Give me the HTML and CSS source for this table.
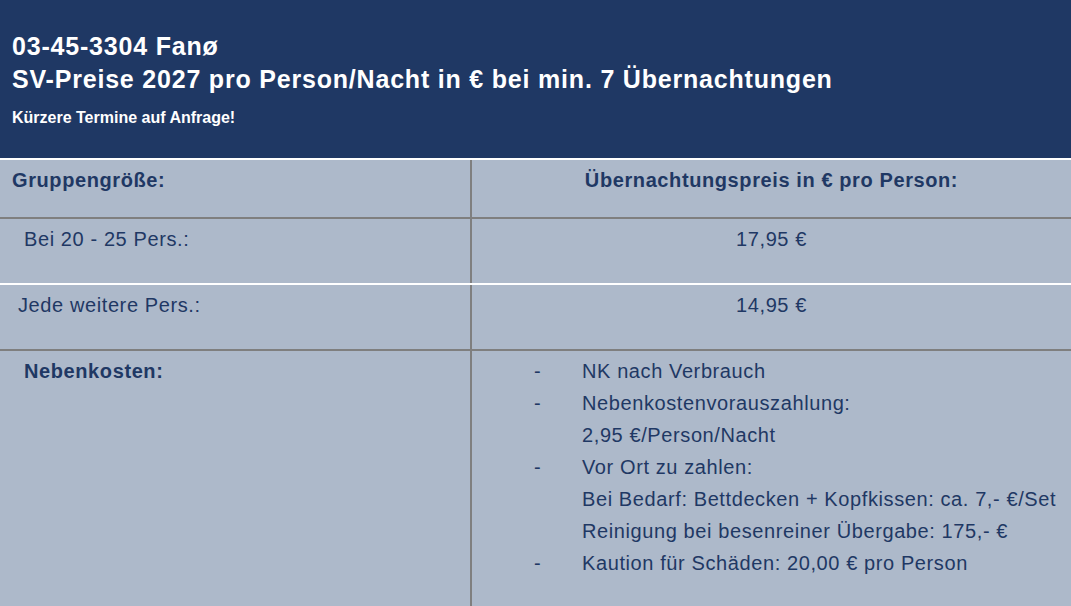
FILE: index.html
```html
<!DOCTYPE html>
<html lang="de">
<head>
<meta charset="utf-8">
<title>03-45-3304 Fanø – SV-Preise 2027</title>
<link rel="stylesheet" href="styles.css">
</head>
<body>
<div class="page">
  <header class="hero">
    <h1 class="title">
      <span class="title-line">03-45-3304 Fanø</span>
      <span class="title-line">SV-Preise 2027 pro Person/Nacht in € bei min. 7 Übernachtungen</span>
    </h1>
    <p class="note">Kürzere Termine auf Anfrage!</p>
  </header>

  <div class="table">
    <div class="row row-head sep-gray">
      <div class="cell cell-left pad-12 bold">Gruppengröße:</div>
      <div class="cell cell-right centered bold">Übernachtungspreis in € pro Person:</div>
    </div>
    <div class="row row-price sep-white">
      <div class="cell cell-left pad-24">Bei 20 - 25 Pers.:</div>
      <div class="cell cell-right centered">17,95 €</div>
    </div>
    <div class="row row-price sep-gray">
      <div class="cell cell-left pad-18">Jede weitere Pers.:</div>
      <div class="cell cell-right centered">14,95 €</div>
    </div>
    <div class="row row-costs">
      <div class="cell cell-left pad-24 list-top bold">Nebenkosten:</div>
      <div class="cell cell-right list-top">
        <ul class="costs">
          <li class="cost"><span class="dash">-</span><span class="cost-text">NK nach Verbrauch</span></li>
          <li class="cost"><span class="dash">-</span><span class="cost-text">Nebenkostenvorauszahlung:<br>2,95 €/Person/Nacht</span></li>
          <li class="cost"><span class="dash">-</span><span class="cost-text">Vor Ort zu zahlen:<br>Bei Bedarf: Bettdecken + Kopfkissen: ca. 7,- €/Set<br>Reinigung bei besenreiner Übergabe: 175,- €</span></li>
          <li class="cost"><span class="dash">-</span><span class="cost-text">Kaution für Schäden: 20,00 € pro Person</span></li>
        </ul>
      </div>
    </div>
  </div>
</div>
</body>
</html>
```

FILE: styles.css
```css
* {
  box-sizing: border-box;
}

html, body {
  margin: 0;
  padding: 0;
}

body {
  font-family: "Liberation Sans", Arial, sans-serif;
  background: #adb9ca;
  color: #1f3864;
}

.page {
  width: 100%;
  height: 100vh;
  display: flex;
  flex-direction: column;
  overflow: hidden;
}

/* ---------- header ---------- */
.hero {
  flex: 0 0 160px;
  background: #1f3864;
  color: #ffffff;
  padding: 30px 12px 0 12px;
  border-bottom: 2px solid #ffffff;
}

.title {
  margin: 0;
  font-size: 25px;
  line-height: 33px;
  font-weight: bold;
  letter-spacing: 0.8px;
}

.title-line {
  display: block;
  white-space: nowrap;
}

.note {
  margin: 12px 0 0 0;
  font-size: 16px;
  line-height: 20px;
  font-weight: bold;
}

/* ---------- table ---------- */
.table {
  flex: 1 1 auto;
  display: flex;
  flex-direction: column;
  font-size: 20px;
  line-height: 32px;
  letter-spacing: 0.6px;
}

.row {
  display: grid;
  grid-template-columns: 472px 1fr;
}

.row-head {
  flex: 0 0 59px;
}

.row-price {
  flex: 0 0 66px;
}

.row-costs {
  flex: 1 1 auto;
}

.sep-gray {
  border-bottom: 2px solid #7f7f7f;
}

.sep-white {
  border-bottom: 2px solid #ffffff;
}

.cell {
  padding-top: 4px;
  white-space: nowrap;
}

.cell-left {
  border-right: 2px solid #7f7f7f;
}

.centered {
  text-align: center;
}

.bold {
  font-weight: bold;
}

.pad-12 { padding-left: 12px; }
.pad-18 { padding-left: 18px; }
.pad-24 { padding-left: 24px; }

.list-top {
  padding-top: 4px;
}

/* ---------- costs list ---------- */
.costs {
  list-style: none;
  margin: 0;
  padding: 0 0 0 62px;
}

.cost {
  display: grid;
  grid-template-columns: 48px 1fr;
}

.dash {
  display: block;
}
```
